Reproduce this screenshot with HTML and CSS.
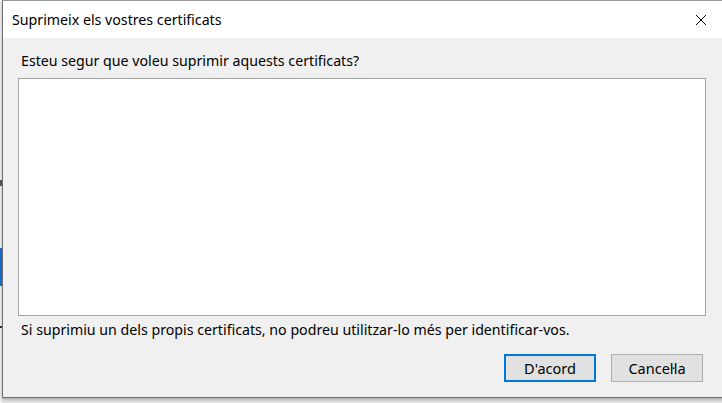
FILE: index.html
```html
<!DOCTYPE html>
<html lang="ca">
<head>
  <meta charset="UTF-8" />
  <title>Suprimeix els vostres certificats</title>
  <link rel="stylesheet" href="styles.css">
</head>
<body>
  <div class="screen">
    <div class="behind">
      <span class="mark mark-top"></span>
      <span class="mark mark-blue"></span>
      <span class="mark mark-low"></span>
    </div>
    <div class="dialog">
      <div class="titlebar">
        <span class="title">Suprimeix els vostres certificats</span>
        <button class="close" aria-label="Tanca">
          <svg width="12" height="12" viewBox="0 0 12 12">
            <path d="M1 1 L11 11 M11 1 L1 11" stroke="#000" stroke-width="1" fill="none" />
          </svg>
        </button>
      </div>
      <div class="content">
        <p class="question">Esteu segur que voleu suprimir aquests certificats?</p>
        <div class="list"></div>
        <p class="note">Si suprimiu un dels propis certificats, no podreu utilitzar-lo més per identificar-vos.</p>
        <div class="actions">
          <button class="btn default">D'acord</button>
          <button class="btn">Cancel·la</button>
        </div>
      </div>
    </div>
  </div>
</body>
</html>
```

FILE: styles.css
```css
* {
  margin: 0;
  padding: 0;
  box-sizing: border-box;
}

body {
  width: 722px;
  height: 403px;
  overflow: hidden;
  background: #e6e6e6;
  font-family: 'Noto Sans', 'Open Sans', sans-serif;
  color: #000;
}

.screen {
  display: flex;
  height: 403px;
}

.behind {
  width: 2px;
  flex-shrink: 0;
  display: flex;
  flex-direction: column;
  background: #f0f0f0;
}

.mark {
  display: block;
  width: 2px;
}

.mark-top {
  height: 6px;
  margin-top: 180px;
  background: #555;
}

.mark-blue {
  height: 38px;
  margin-top: 62px;
  background: #1a6fd0;
}

.mark-low {
  height: 2px;
  margin-top: 40px;
  background: #333;
}

.dialog {
  width: 722px;
  height: 398px;
  flex-shrink: 0;
  background: #f0f0f0;
  border: 1px solid #6e6e6e;
  border-top-color: #9a9a9a;
  border-right: none;
  box-shadow: 0 2px 3px rgba(0, 0, 0, 0.25);
  display: flex;
  flex-direction: column;
}

.titlebar {
  height: 37px;
  background: #fff;
  display: flex;
  align-items: center;
  justify-content: space-between;
  padding-left: 9px;
}

.title {
  font-size: 14.2px;
}

.close {
  width: 46px;
  height: 37px;
  margin-right: 0;
  border: none;
  background: transparent;
  display: flex;
  align-items: center;
  justify-content: center;
}

.content {
  padding: 13px 0 0 15px;
  display: flex;
  flex-direction: column;
}

.question,
.note {
  font-size: 14.2px;
  line-height: 20px;
  padding-left: 3px;
}

.list {
  width: 688px;
  height: 238px;
  margin-top: 7px;
  background: #fff;
  border: 1px solid #a3a3a3;
}

.note {
  margin-top: 4px;
}

.actions {
  display: flex;
  gap: 15px;
  margin-top: 14px;
  width: 685px;
  justify-content: flex-end;
}

.btn {
  width: 92px;
  height: 28px;
  font-family: inherit;
  font-size: 14.5px;
  background: #e1e1e1;
  border: 1px solid #adadad;
  color: #000;
}

.btn.default {
  border: 2px solid #0078d7;
}
```
